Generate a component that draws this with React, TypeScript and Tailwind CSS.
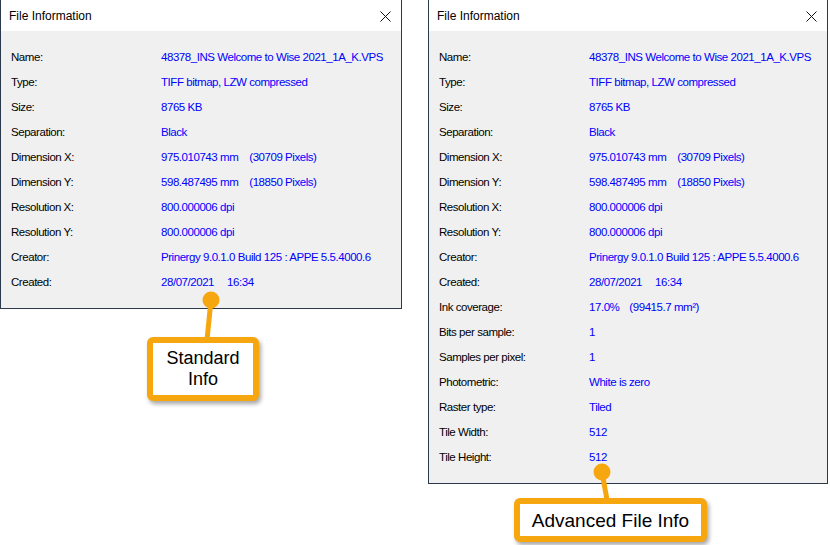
import React from "react";

type Row = { label: string; value: React.ReactNode };

const V2 = ({ a, b, gap }: { a: string; b: string; gap: string }) => (
  <span className="flex">
    <span>{a}</span>
    <span className={gap}>{b}</span>
  </span>
);

const baseRows: Row[] = [
  { label: "Name:", value: "48378_INS Welcome to Wise 2021_1A_K.VPS" },
  { label: "Type:", value: "TIFF bitmap, LZW compressed" },
  { label: "Size:", value: "8765 KB" },
  { label: "Separation:", value: "Black" },
  { label: "Dimension X:", value: <V2 a="975.010743 mm" b="(30709 Pixels)" gap="ml-[11px]" /> },
  { label: "Dimension Y:", value: <V2 a="598.487495 mm" b="(18850 Pixels)" gap="ml-[11px]" /> },
  { label: "Resolution X:", value: "800.000006 dpi" },
  { label: "Resolution Y:", value: "800.000006 dpi" },
  { label: "Creator:", value: "Prinergy 9.0.1.0 Build 125 : APPE 5.5.4000.6" },
  { label: "Created:", value: <V2 a="28/07/2021" b="16:34" gap="ml-[13px]" /> },
];

const advRows: Row[] = [
  { label: "Ink coverage:", value: <V2 a="17.0%" b="(99415.7 mm²)" gap="ml-[10px]" /> },
  { label: "Bits per sample:", value: "1" },
  { label: "Samples per pixel:", value: "1" },
  { label: "Photometric:", value: "White is zero" },
  { label: "Raster type:", value: "Tiled" },
  { label: "Tile Width:", value: "512" },
  { label: "Tile Height:", value: "512" },
];

function Dialog({ rows, width }: { rows: Row[]; width: string }) {
  return (
    <div className={`${width} shrink-0 border-x border-b border-[#2b3a4a] bg-[#f0f0f0]`}>
      <div className="h-[31px] bg-white flex items-center justify-between pl-[8px] pr-[10px]">
        <span className="text-[12px] text-black font-['Liberation_Sans',sans-serif] leading-none mt-[1px]">
          File Information
        </span>
        <svg width="11" height="11" viewBox="0 0 11 11" className="mt-[1px]">
          <path d="M0.5 0.5 L10.5 10.5 M10.5 0.5 L0.5 10.5" stroke="#111" strokeWidth="1" />
        </svg>
      </div>
      <div className="pt-[14px] pb-[13px] pl-[10px] font-['Liberation_Sans',sans-serif] text-[11.5px] tracking-[-0.45px]">
        {rows.map((r) => (
          <div key={r.label} className="h-[25px] flex items-center">
            <span className="w-[150px] shrink-0 text-black">{r.label}</span>
            <span className="text-[#0000ff]">{r.value}</span>
          </div>
        ))}
      </div>
    </div>
  );
}

export default function App() {
  return (
    <div className="relative w-[830px] h-[545px] bg-white overflow-hidden">
      <div className="flex items-start gap-[26px]">
        <Dialog rows={baseRows} width="w-[402px]" />
        <Dialog rows={[...baseRows, ...advRows]} width="w-[400px]" />
      </div>

      <svg className="absolute left-0 top-0" width="830" height="545">
        <line x1="211" y1="300" x2="207" y2="340" stroke="#f6a70f" strokeWidth="5" />
        <circle cx="211" cy="300" r="8.5" fill="#f6a70f" />
        <line x1="602" y1="472" x2="607" y2="500" stroke="#f6a70f" strokeWidth="5" />
        <circle cx="602" cy="472" r="8.5" fill="#f6a70f" />
      </svg>

      <div className="absolute left-[147px] top-[337px] w-[112px] h-[64px] border-[6px] border-[#f6a70f] rounded-[6px] bg-white shadow-[2px_3px_4px_rgba(0,0,0,0.35)] flex flex-col items-center justify-center font-['Liberation_Sans',sans-serif] text-[18px] leading-[21px] text-black">
        <span>Standard</span>
        <span>Info</span>
      </div>

      <div className="absolute left-[514px] top-[498px] w-[193px] h-[44px] border-[6px] border-[#f6a70f] rounded-[6px] bg-white shadow-[2px_3px_4px_rgba(0,0,0,0.35)] flex items-center justify-center font-['Liberation_Sans',sans-serif] text-[19px] leading-none text-black">
        Advanced File Info
      </div>
    </div>
  );
}
